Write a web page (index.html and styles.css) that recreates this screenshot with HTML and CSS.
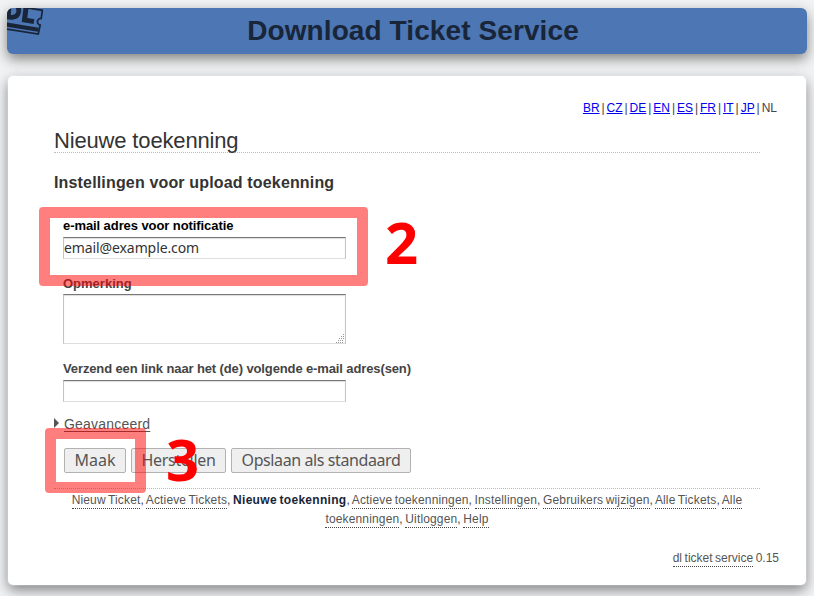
FILE: index.html
```html
<!DOCTYPE html>
<html lang="nl">
<head>
<meta charset="utf-8">
<title>Download Ticket Service</title>
<link rel="stylesheet" href="styles.css">
</head>
<body>
<header class="banner">
  <svg class="logo" width="40" height="30" viewBox="0 0 40 30" aria-hidden="true">
    <g fill="none" stroke="#192538">
      <path d="M15 -1 L35.3 2.3 L34.2 10.5 A3.2 3.2 0 0 0 33.2 17 L31.3 26 L-2 20.8" stroke-width="1.7"/>
      <path d="M-2 16.3 L31.5 21.8" stroke-width="4"/>
      <path d="M2.5 -6 L1.2 8.9 L4.5 9.3 Q10.8 9.5 11.7 3.5 Q12 -2 8 -5" stroke-width="4.8"/>
      <path d="M19.4 -3 L17.5 12 L27 13.6" stroke-width="5"/>
    </g>
  </svg>
  <h1>Download Ticket Service</h1>
</header>
<main class="card">
  <nav class="langs"><a href="#">BR</a><i>|</i><a href="#">CZ</a><i>|</i><a href="#">DE</a><i>|</i><a href="#">EN</a><i>|</i><a href="#">ES</a><i>|</i><a href="#">FR</a><i>|</i><a href="#">IT</a><i>|</i><a href="#">JP</a><i>|</i><span>NL</span></nav>
  <h2>Nieuwe toekenning</h2>
  <h3>Instellingen voor upload toekenning</h3>
  <form>
    <div class="field notify"><label for="notify">e-mail adres voor notificatie</label><input id="notify" value="email@example.com"></div>
    <div class="field comment"><label for="comment">Opmerking</label>
      <div class="area"><textarea id="comment"></textarea>
        <svg class="grip" width="9" height="9" viewBox="0 0 9 9" aria-hidden="true"><path d="M7 0h1v1h-1zM5 2h1v1h-1zM7 2h1v1h-1zM3 4h1v1h-1zM5 4h1v1h-1zM7 4h1v1h-1zM2 6h1v1h-1zM4 6h1v1h-1zM6 6h1v1h-1zM0 8h1v1h-1zM2 8h1v1h-1zM4 8h1v1h-1zM6 8h1v1h-1z" fill="#999"/></svg>
      </div>
    </div>
    <div class="field send"><label for="send">Verzend een link naar het (de) volgende e-mail adres(sen)</label><input id="send"></div>
    <div class="advanced"><span class="arrow"></span><a href="#">Geavanceerd</a></div>
    <div class="actions"><button type="button" class="make">Maak</button><button type="button" class="reset">Herstellen</button><button type="button" class="save">Opslaan als standaard</button></div>
  </form>
  <nav class="menu"><a href="#">Nieuw Ticket</a>, <a href="#">Actieve Tickets</a>, <b>Nieuwe toekenning</b>, <a href="#">Actieve toekenningen</a>, <a href="#">Instellingen</a>, <a href="#">Gebruikers wijzigen</a>, <a href="#">Alle Tickets</a>, <a href="#">Alle toekenningen</a>, <a href="#">Uitloggen</a>, <a href="#">Help</a></nav>
  <footer><a href="#">dl ticket service</a> 0.15</footer>
</main>
<div class="mark mark-email"></div>
<div class="mark mark-make"></div>
<span class="step step-two">2</span>
<span class="step step-three">3</span>
</body>
</html>
```

FILE: styles.css
```css
* { box-sizing: border-box; }
html { height: 100%; overflow: hidden; }
body {
  margin: 0;
  height: 596px;
  padding: 8px 7px 0;
  overflow: hidden;
  position: relative;
  background: #f2f3f5;
  font-family: "Liberation Sans", Arial, sans-serif;
  font-size: 12px;
  color: #444;
}
.banner {
  position: relative;
  height: 46px;
  border-radius: 6px;
  overflow: hidden;
  background: #4c76b4;
  box-shadow: 0 5px 13px rgba(70,70,65,.66);
}
.logo { position: absolute; left: 0; top: 0; }
h1 {
  margin: 0;
  padding-left: 12px;
  text-align: center;
  font-size: 28px;
  line-height: 45px;
  letter-spacing: 0.1px;
  color: #192538;
}
.card {
  height: 509px;
  margin: 22px 1px 0;
  padding: 22px 46px 0;
  border-radius: 5px;
  background: #fff;
  box-shadow: 0 0 0 1px rgba(255,255,255,.2), 0 5px 13px rgba(70,70,70,.66);
}
.langs {
  display: flex;
  justify-content: flex-end;
  margin-right: -17px;
  height: 20px;
  line-height: 20px;
}
.langs a { color: #00e; text-underline-offset: 1px; }
.langs i { font-style: normal; width: 7px; text-align: center; }
h2 {
  margin: 9px 0 0;
  height: 26px;
  border-bottom: 1px dotted #bbb;
  font-size: 22px;
  font-weight: normal;
  line-height: 27px;
  letter-spacing: -0.16px;
  color: #333;
}
h3 {
  margin: 20px 0 0;
  font-size: 16px;
  line-height: 20px;
  letter-spacing: 0.16px;
  color: #333;
}
form { height: 295px; padding-top: 25px; }
.field { display: flex; flex-direction: column; width: 360px; margin-left: 9px; }
.notify { height: 58px; }
.comment { height: 85px; }
.send { height: 47px; }
label { height: 19px; font-size: 13px; font-weight: bold; line-height: 16px; letter-spacing: -0.12px; color: #444; }
.notify label { color: #000; letter-spacing: -0.08px; }
.comment label { height: 18px; letter-spacing: 0; }
input, textarea {
  display: block;
  width: 283px;
  height: 22px;
  margin: 0;
  padding: 0 0 2px;
  border: 1px solid #c4c4c4;
  border-top-color: #777;
  border-bottom-color: #ddd;
  box-shadow: inset 0 1px 1px #ddd;
  background: #fff;
  font: 14px "Noto Sans", sans-serif;
  color: #333;
  letter-spacing: -0.1px;
}
textarea { height: 50px; resize: none; }
.area { position: relative; width: 283px; }
.grip { position: absolute; right: 1px; bottom: 1px; }
.advanced { display: flex; height: 35px; padding-top: 6px; font-size: 14px; line-height: 20px; letter-spacing: 0.2px; }
.advanced a { color: #555; text-underline-offset: 2px; }
.arrow { width: 0; height: 0; margin: 4px 5px 0 0; border: 5px solid transparent; border-left-color: #555; border-right: 0; }
.actions { display: flex; gap: 5px; margin: 5px 0 0 10px; }
button {
  height: 25px;
  padding: 0;
  border: 1px solid #b2b2b2;
  border-radius: 2px;
  background: #efefef;
  font: 16px/23px "Noto Sans", sans-serif;
  color: #555;
}
.make { width: 62px; }
.reset { width: 95px; letter-spacing: -0.3px; }
.save { width: 180px; letter-spacing: -0.4px; }
.menu {
  border-top: 1px dotted #bbb;
  padding-top: 2px;
  text-align: center;
  line-height: 19px;
  letter-spacing: 0.15px;
  word-spacing: -1px;
}
.menu a, footer a { color: #555; text-decoration: none; border-bottom: 1px dotted #444; padding-bottom: 1px; }
.menu b { color: #192538; letter-spacing: 0.3px; }
footer { margin: 20px -19px 0 0; text-align: right; line-height: 19px; color: #555; word-spacing: -0.8px; }
.mark { position: absolute; border: 11px solid rgba(255,0,0,.5); border-radius: 4px; }
.mark-email { left: 39px; top: 207px; width: 329px; height: 79px; }
.mark-make { left: 45px; top: 428px; width: 101px; height: 65px; }
.step { position: absolute; font: bold 58px/60px "Noto Sans", sans-serif; color: #f00; }
.step-two { left: 385px; top: 212px; }
.step-three { left: 166px; top: 429px; }
```
